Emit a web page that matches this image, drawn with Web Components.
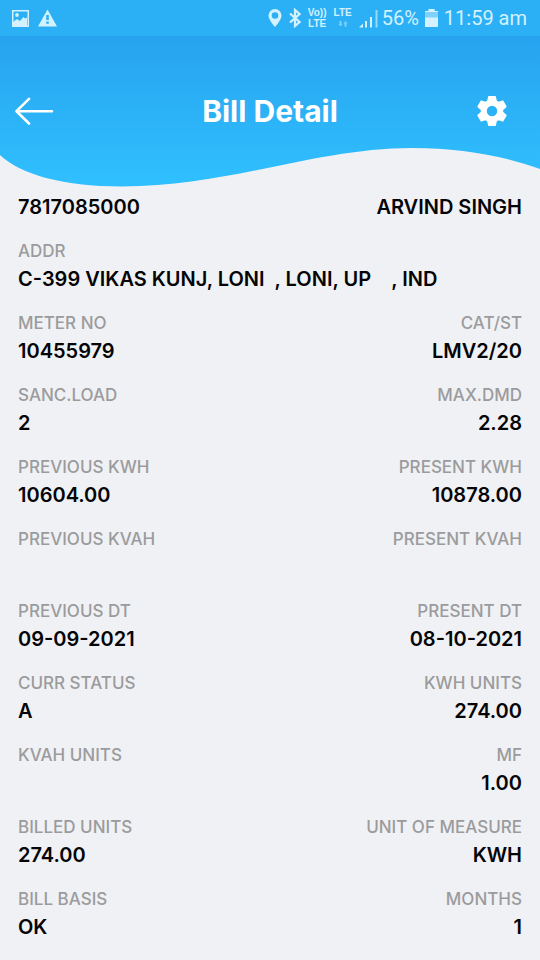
<!DOCTYPE html>
<html lang="en">
<head>
<meta charset="utf-8">
<meta name="viewport" content="width=device-width, initial-scale=1">
<title>Bill Detail</title>
<style>
html { background: #f0f1f4; }
body { margin: 0; font-family: Inter, "Open Sans", sans-serif; color: #050507; }
</style>
</head>
<body>
<bill-app></bill-app>

<template id="status-bar">
<style>
:host { display: flex; align-items: center; gap: 4px; height: 36px; padding: 0 13px 0 12px; box-sizing: border-box; background: #2cb0f5; color: #d3f1ff; font: 20px/24px Roboto, sans-serif; white-space: nowrap; }
svg { display: block; fill: currentColor; flex: none; }
.notices { display: flex; gap: 8px; flex: 1; }
.signal { display: flex; align-items: center; gap: 7px; }
.clock { display: flex; align-items: center; gap: 6px; }
.net { display: grid; justify-items: center; font: 700 10px/11px "Liberation Sans", sans-serif; }
</style>
<span class="notices">
<svg width="18" height="18" viewBox="0 0 18 18" role="img" aria-label="Image"><path fill-rule="evenodd" d="M0 1h17v17H0zM1.500 2.500v14h14v-14z"/><path d="M1 17v-4l4-3 3 2 3.500-4 1.500 1.500 2-1V17z"/><circle cx="5" cy="6" r="1.900"/></svg>
<svg width="20" height="18" viewBox="0 0 20 18" role="img" aria-label="Warning"><path fill-rule="evenodd" d="M9.500 0.500 19 17.500H0zM8.200 6v5h2.600V6zm0 6.500v2.300h2.600v-2.300z"/></svg>
</span>
<span class="signal">
<svg width="14" height="18" viewBox="0 0 14 18" role="img" aria-label="Location"><path fill-rule="evenodd" d="M7 0a6.500 6.500 0 0 0-6.500 6.500C.5 11 7 18 7 18s6.500-7 6.500-11.500A6.500 6.500 0 0 0 7 0zm0 3.200a3.300 3.300 0 1 1 0 6.600 3.300 3.300 0 0 1 0-6.600z"/></svg>
<svg width="12" height="20" viewBox="0 0 12 20" role="img" aria-label="Bluetooth"><path d="M1 5.500 10.500 14 6 18V2l4.500 4L1 14.500" fill="none" stroke="currentColor" stroke-width="2.200"/></svg>
<span class="net"><span>Vo))</span><span>LTE</span></span>
<span class="net"><span>LTE</span>
<svg width="10" height="11" viewBox="0 0 10 11" opacity=".5"><path d="M1.500 3h2v3h1L2.500 8.500.5 6h1zM6.500 8.500h2v-3h1L7.500 3l-2 2.500h1z"/></svg></span>
<svg width="19" height="19" viewBox="0 0 19 19" role="img" aria-label="Signal"><path d="M0 18.500l4-4v4zM6 12h2v6.500H6zM11 8h2v10.500h-2z"/><path d="M16.500 1h2v17.500h-2z" opacity=".65"/></svg>
</span>
<span class="clock"><span>56%</span>
<svg width="13" height="19" viewBox="0 0 13 19" role="img" aria-label="Battery"><path d="M3.500 0h6v2H13v16H0V2h3.500z" opacity=".5"/><path d="M3.500 0h6v2H13v1H0V2h3.500zM0 8.500h13V18H0z"/></svg>
<time>11:59 am</time></span>
</template>

<template id="wave-header">
<style>
:host { display: grid; height: 157px; }
.wave, .bar { grid-area: 1 / 1; }
.wave { width: 100%; height: 152px; display: block; }
.bar { display: grid; grid-template-columns: 54px 1fr 54px; align-items: center; align-self: start; height: 150px; padding: 0 14px; }
h1 { margin: 0; text-align: center; color: #fff; font: 700 30px/36px Inter, sans-serif; }
button { display: flex; width: 40px; height: 40px; padding: 0; border: 0; background: none; color: #fff; align-items: center; justify-content: center; }
button svg { display: block; flex: none; }
</style>
<svg class="wave" viewBox="0 0 540 152" preserveAspectRatio="none" aria-hidden="true">
<defs><linearGradient id="sky" x1="0" y1="0" x2="0" y2="1"><stop stop-color="#27a3ee"/><stop offset="1" stop-color="#30c0ff"/></linearGradient></defs>
<path fill="url(#sky)" d="M0 0H540V133C500 119 460 112 412 112C315 112 230 150.500 122 150.500C62 150.500 20 138 0 119Z"/></svg>
<div class="bar">
<button type="button" aria-label="Back"><svg width="40" height="28" viewBox="0 0 40 28" fill="none" stroke="currentColor" stroke-width="2.600" stroke-linecap="round" stroke-linejoin="round"><path d="M15 1.800 2.500 14.200 15 26.500M2.500 14.200H38"/></svg></button>
<h1><slot></slot></h1>
<button type="button" aria-label="Settings"><svg width="32" height="32" viewBox="-16 -16 32 32" fill="currentColor" stroke="currentColor" stroke-linejoin="round"><defs><path id="teeth" stroke-width="1.500" d="M-3.200-14.200H3.200L4.400-8.500H-4.400ZM-3.200 14.200H3.200L4.400 8.500H-4.400Z"/></defs><circle r="8.200" fill="none" stroke-width="6"/><use href="#teeth"/><use href="#teeth" transform="rotate(60)"/><use href="#teeth" transform="rotate(120)"/></svg></button>
</div>
</template>

<template id="bill-row">
<style>
:host { display: flex; justify-content: space-between; gap: 16px; }
</style>
<slot></slot>
</template>

<template id="bill-field">
<style>
:host { display: block; line-height: 28px; }
:host([end]) { text-align: right; }
.label { color: #9b9b9d; font-size: 17px; font-weight: 500; }
.value { min-height: 28px; font-size: 20px; font-weight: 600; white-space: pre-wrap; }
</style>
<div class="label"></div>
<div class="value"><slot></slot></div>
</template>

<template id="bill-app">
<style>
:host { display: block; }
main { display: grid; gap: 16px; padding: 0 18px 19px; }
</style>
<status-bar></status-bar>
<wave-header>Bill Detail</wave-header>
<main>
<bill-row><bill-field>7817085000</bill-field><bill-field end>ARVIND SINGH</bill-field></bill-row>
<bill-row><bill-field label="ADDR">C-399 VIKAS KUNJ, LONI  , LONI, UP    , IND</bill-field></bill-row>
<bill-row><bill-field label="METER NO">10455979</bill-field><bill-field end label="CAT/ST">LMV2/20</bill-field></bill-row>
<bill-row><bill-field label="SANC.LOAD">2</bill-field><bill-field end label="MAX.DMD">2.28</bill-field></bill-row>
<bill-row><bill-field label="PREVIOUS KWH">10604.00</bill-field><bill-field end label="PRESENT KWH">10878.00</bill-field></bill-row>
<bill-row><bill-field label="PREVIOUS KVAH"></bill-field><bill-field end label="PRESENT KVAH"></bill-field></bill-row>
<bill-row><bill-field label="PREVIOUS DT">09-09-2021</bill-field><bill-field end label="PRESENT DT">08-10-2021</bill-field></bill-row>
<bill-row><bill-field label="CURR STATUS">A</bill-field><bill-field end label="KWH UNITS">274.00</bill-field></bill-row>
<bill-row><bill-field label="KVAH UNITS"></bill-field><bill-field end label="MF">1.00</bill-field></bill-row>
<bill-row><bill-field label="BILLED UNITS">274.00</bill-field><bill-field end label="UNIT OF MEASURE">KWH</bill-field></bill-row>
<bill-row><bill-field label="BILL BASIS">OK</bill-field><bill-field end label="MONTHS">1</bill-field></bill-row>
</main>
</template>

<script>
class TemplateElement extends HTMLElement {
  constructor() {
    super();
    this.attachShadow({ mode: "open" }).append(
      document.getElementById(this.constructor.template).content.cloneNode(true));
  }
}
class StatusBar extends TemplateElement { static template = "status-bar"; }
class WaveHeader extends TemplateElement { static template = "wave-header"; }
class BillRow extends TemplateElement { static template = "bill-row"; }
class BillField extends TemplateElement {
  static template = "bill-field";
  connectedCallback() {
    const label = this.shadowRoot.querySelector(".label");
    label.textContent = this.getAttribute("label") || "";
  }
}
class BillApp extends TemplateElement { static template = "bill-app"; }
customElements.define("status-bar", StatusBar);
customElements.define("wave-header", WaveHeader);
customElements.define("bill-row", BillRow);
customElements.define("bill-field", BillField);
customElements.define("bill-app", BillApp);
</script>
</body>
</html>
